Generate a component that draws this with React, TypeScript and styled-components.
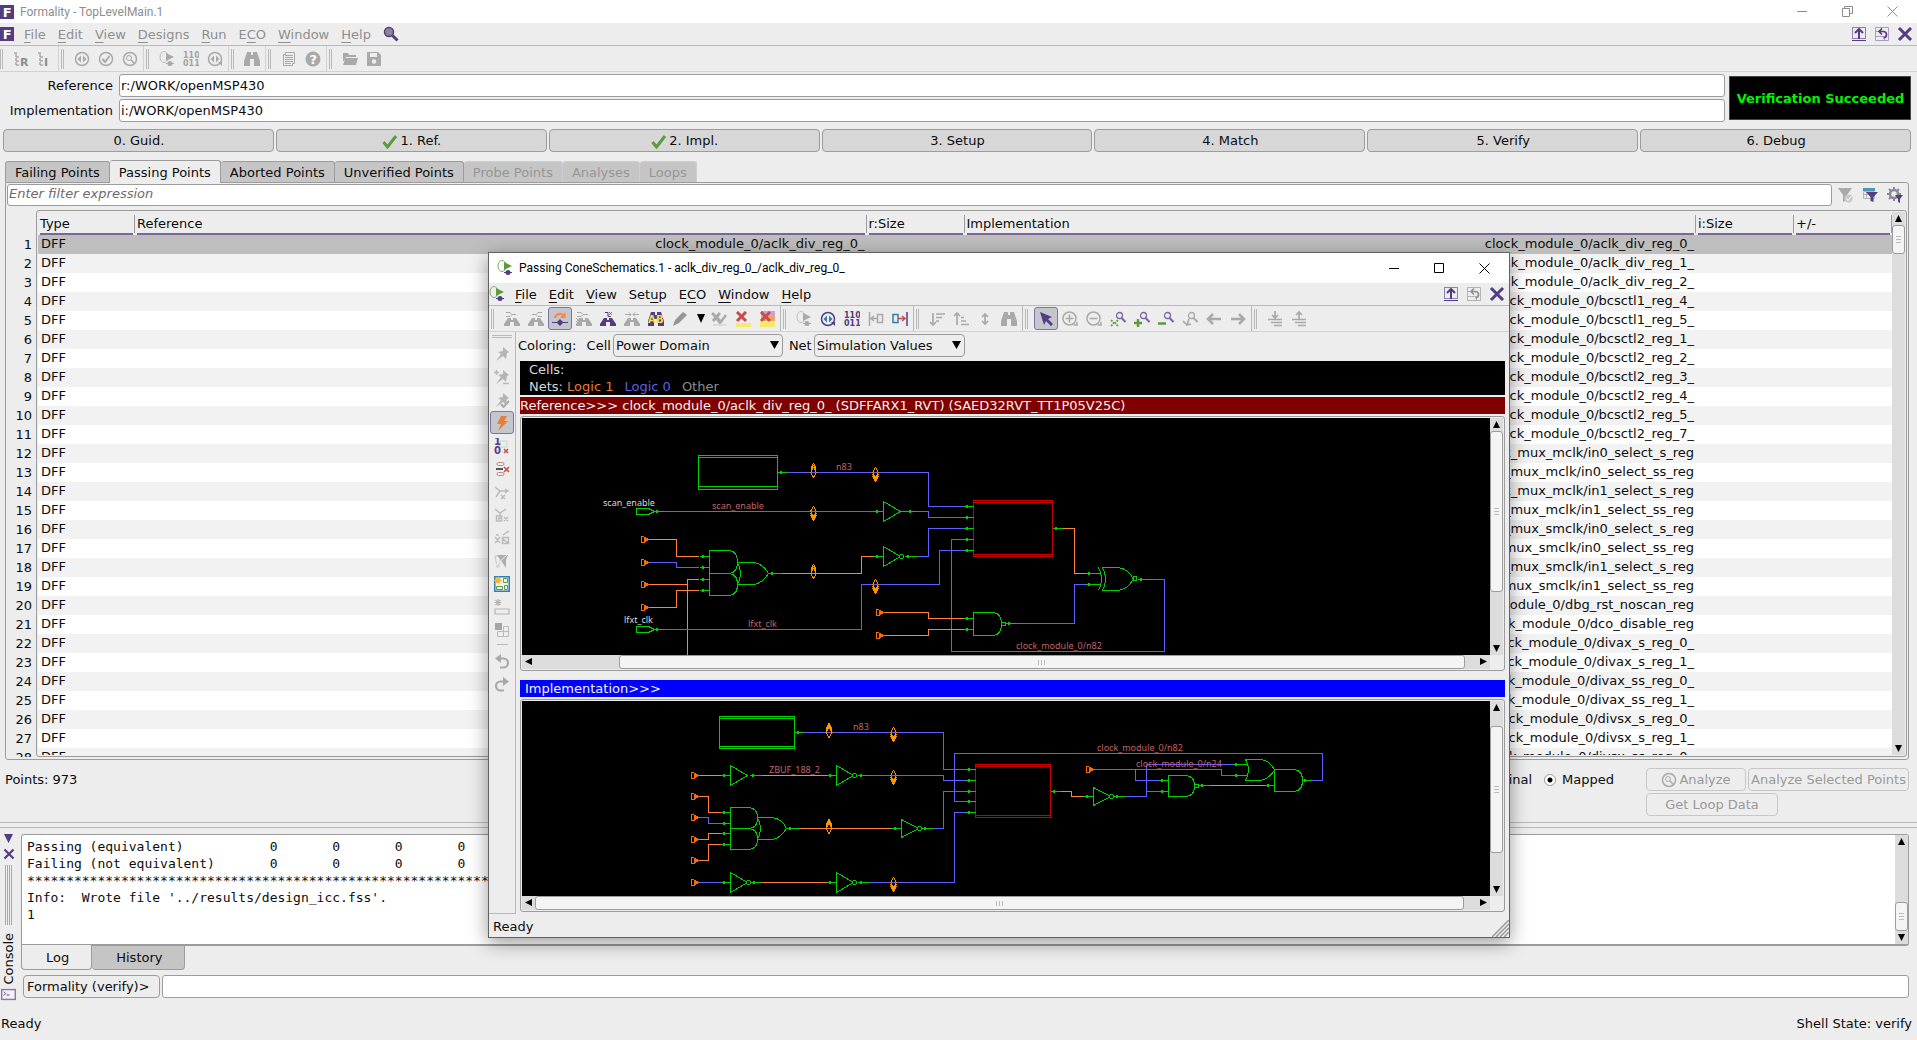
import React from "react";
import styled, { createGlobalStyle, css } from "styled-components";

/* ---------- tokens ---------- */
const c = {
  face: "#ededed",
  line: "#9c9c9c",
  soft: "#b9b9b9",
  faint: "#d2d2d2",
  text: "#0c0c0c",
  mute: "#8f8f8f",
  purple: "#533c82",
  header: "#7a6697",
  gray: "#a9a9a9",
  green: "#5d9a3c",
  orange: "#ff8240",
  blue: "#5f5fff",
  gate: "#00d000",
  red: "#c80000",
};

const Global = createGlobalStyle`
  * { box-sizing: border-box; }
  body { margin: 0; background: ${c.face}; overflow: hidden; }
  button, input, select { font: inherit; color: inherit; margin: 0; border-radius: 0; }
`;

/* ---------- icons ---------- */
const P = c.purple;
const G = c.gray;

const binoc = (f: string) => (
  <path fill={f} d="M3 1h4v3h2V1h4l3 9v5h-6V8H6v7H0v-5z" />
);
const smallBinoc = (f: string) => (
  <path fill={f} d="M4 7h3v2h2V7h3l4 6v2h-6v-4H6v4H0v-2z" />
);
const bits = (f: string) => (
  <g fill={f} fontFamily="DejaVu Sans" fontWeight="700" fontSize="8">
    <text x="0" y="7">110</text>
    <text x="0" y="15">011</text>
  </g>
);
const cone = (a: string, b: string, d: string) => (
  <>
    <ellipse cx="5" cy="6" rx="4" ry="5.500" fill="none" stroke={a} />
    <path d="M7 2l8 4-8 4z" fill={b} />
    <circle cx="11" cy="12.500" r="2.500" fill={d} />
    <path d="M7 12.500h8" stroke={d} />
  </>
);
const compass = (a: string, b: string, tail: boolean) => (
  <>
    <circle cx="8" cy="8" r="6.500" fill="none" stroke={a} strokeWidth="1.500" />
    <path d="M7 4.500v7L3.500 8zM9 4.500v7L12.500 8z" fill={b} />
    {tail && <path d="M11 11h4v4z" fill={a} />}
  </>
);
const magnifier = (a: string) => (
  <>
    <circle cx="9.500" cy="4.500" r="3" fill="none" stroke={a} strokeWidth="1.300" />
    <path d="M11.500 7l4 4" stroke={a} strokeWidth="2" />
  </>
);
const zoomCircle = (f: string, plus: boolean) => (
  <g stroke={f} fill="none" strokeWidth="1.500">
    <circle cx="7.500" cy="7.500" r="6.500" />
    <path d={plus ? "M3.500 7.500h8M7.500 3.500v8" : "M3.500 7.500h8"} />
    <path d="M11.500 14h3.500v-3" />
  </g>
);
const pin = (f: string) => (
  <path fill={f} d="M9 1l6 5-2 1-1 6-3-3-7 5 5-7-3-2 5-1z" />
);
const treeIcon = (letter: string) => (
  <>
    <path d="M1 2h4M3 3v12M3 6h4M3 10h4M3 14h4" stroke={G} strokeWidth="1.500" strokeDasharray="3 1" fill="none" />
    <text x="7" y="15" fontFamily="DejaVu Sans" fontWeight="700" fontSize="11" fill="#8c8c8c">{letter}</text>
  </>
);
const upBox = (
  <>
    <rect x="1.500" y="1.500" width="13" height="11" fill="none" stroke="#8f7fb5" />
    <path d="M8 13V3M4 7l4-4 4 4" fill="none" stroke={P} strokeWidth="2" />
    <path d="M1 14.500h14" stroke={P} />
  </>
);
const backBox = (a: string, b: string) => (
  <>
    <path d="M1.500 1.500h13v13h-13zM1.500 5.500h4M1.500 10.500h9v4" fill="none" stroke={b} />
    <path d="M5 5.500h4q3.500 0 3.500 3t-3 3.500M8 2.500l-3 3 3 3" fill="none" stroke={a} strokeWidth="1.700" />
  </>
);
const undo = (
  <>
    <path d="M3 5.500h6.500a4.500 4.500 0 0 1 0 9H6" fill="none" stroke={G} strokeWidth="2.200" />
    <path d="M1 5.500L7 1v9z" fill={G} />
  </>
);

const icons: Record<string, React.ReactNode> = {
  logo: (
    <>
      <rect x="0" y="0" width="16" height="16" fill={P} />
      <text x="3" y="14" fontFamily="DejaVu Sans" fontWeight="700" fontSize="15" fill="#fff">F</text>
    </>
  ),
  cone: cone("#7fae66", c.green, P),
  coneOff: cone("#bdbdbd", G, G),
  search: (
    <>
      <circle cx="6" cy="6" r="4.500" fill="#8b8794" stroke={P} strokeWidth="1.500" />
      <path d="M9.500 9.500l5 5" stroke={P} strokeWidth="3" />
    </>
  ),
  treeR: treeIcon("R"),
  treeI: treeIcon("I"),
  compassOff: compass(G, G, false),
  compassTail: compass(G, G, true),
  compassOn: compass(P, "#2c7fb5", true),
  check: (
    <>
      <circle cx="8" cy="8" r="6.500" fill="none" stroke={G} strokeWidth="1.500" />
      <path d="M4.500 8l2.500 3 4.500-6" fill="none" stroke={G} strokeWidth="2" />
    </>
  ),
  lens: (
    <>
      <circle cx="8" cy="8" r="6.500" fill="none" stroke={G} strokeWidth="1.500" />
      <circle cx="7" cy="7" r="2.500" fill="none" stroke={G} />
      <path d="M9 9l3.500 3.500" stroke={G} strokeWidth="1.500" />
    </>
  ),
  bitsOff: bits("#a3a3a3"),
  bitsOn: bits(P),
  binocOff: binoc(G),
  doc: (
    <>
      <path d="M4.500 1.500h9v11h-2v2h-9v-11h2z" fill="none" stroke={G} />
      <path d="M4 4.500h8M4 6.500h8M4 8.500h8M4 10.500h8M4 12.500h6" stroke={G} />
    </>
  ),
  help: (
    <>
      <circle cx="8" cy="8" r="7.500" fill={G} />
      <text x="4.500" y="13" fontFamily="DejaVu Sans" fontWeight="700" fontSize="13" fill="#fff">?</text>
    </>
  ),
  folder: <path d="M1 2h5l1 2h7v2H4l-2 4H1zM3.500 7H16l-2 7H1z" fill={G} />,
  save: (
    <>
      <path d="M1 1h11l3 3v11H1z" fill={G} />
      <path d="M4 2h7v4H4z" fill="#ededed" />
      <circle cx="8" cy="10.500" r="2.300" fill="#ededed" />
    </>
  ),
  tick: <path d="M1.500 9l4 5L14 3" fill="none" stroke={c.green} strokeWidth="3" />,
  funnelOff: (
    <>
      <path d="M1 1h14L10 8v5l-4 2V8z" fill={G} />
      <circle cx="11.500" cy="11.500" r="4" fill="#c9c9c9" />
      <path d="M9.500 11.500l1.500 2 3-4" fill="none" stroke="#fff" />
    </>
  ),
  funnelTable: (
    <>
      <path d="M1 1h12v3H1z" fill="#4d94bd" />
      <path d="M1.500 4.500h11v7h-11zM1 7.500h11M4.500 4v8" stroke="#b5b5b5" fill="none" />
      <path d="M4 5h12l-4.500 5v5l-3-1v-4z" fill={P} />
    </>
  ),
  gear: (
    <>
      <circle cx="7" cy="7" r="4" fill="none" stroke="#8b8794" strokeWidth="2.500" />
      <path d="M7 0v3M7 11v3M0 7h3M2 2l2 2M12 2l-2 2M2 12l2-2M11 7h3" stroke="#8b8794" strokeWidth="2" />
      <path d="M8 8h8l-3 4v4l-2-1v-3z" fill={P} />
    </>
  ),
  upBox,
  backBoxOn: backBox(P, "#a89cc4"),
  backBoxOff: backBox("#8f8f8f", "#b3b3b3"),
  close: <path d="M2 2l12 12M14 2L2 14" stroke={P} strokeWidth="3" />,
  binA: (<><path d="M2 1.500h4l2 2h4M2 5.500h4l2-2" stroke={G} fill="none" />{smallBinoc(G)}</>),
  binB: (<><path d="M4 3.500h4l2-2h4M8 3.500l2 2h4" stroke={G} fill="none" />{smallBinoc(G)}</>),
  probe: (
    <>
      <path d="M3 7a5 5 0 0 1 9-2" fill="none" stroke={c.orange} strokeWidth="2" />
      <path d="M13.500 1v6H8z" fill={c.orange} />
      <path d="M0 11.500h16" stroke={P} />
      <path d="M8 8l3.500 3.500L8 15l-3.500-3.500z" fill={P} />
    </>
  ),
  binC: (<><path d="M1 1.500h4l2 2h5M1 5.500h4l2-2M0 7l4 4M4 7l-4 4" stroke={G} fill="none" />{smallBinoc(G)}</>),
  binD: (
    <>
      <path d="M5 1.500h3v4h3" stroke={P} fill="none" />
      <path d="M9 1l3 3M12 1L9 4" stroke="#c94b4b" fill="none" />
      {smallBinoc(P)}
    </>
  ),
  binE: (<><path d="M1 3.500h6M9 3.500h6M5 1.500l2 2-2 2M11 1.500l-2 2 2 2" stroke={G} fill="none" />{smallBinoc(G)}</>),
  binAB: (
    <>
      {binoc(P)}
      <g fontFamily="DejaVu Sans" fontWeight="700" fontSize="10" fill="#f2df4e">
        <text x="0" y="12">A</text>
        <text x="8" y="12">B</text>
      </g>
    </>
  ),
  pencil: <path d="M1 15l2-6 8-8 4 3-8 8z" fill="#969696" />,
  down: <path d="M4 3h8L8 12z" fill="#000" />,
  markOff: (
    <>
      <path d="M1 2l8 8M9 2l-7 8" stroke={G} strokeWidth="3" />
      <path d="M6 8l3 4 6-8" stroke={G} strokeWidth="2.500" fill="none" />
      <path d="M2 13h13v2H2z" fill="#dcdcdc" />
    </>
  ),
  markX: (
    <>
      <path d="M1 12h15v4H1z" fill="#f4ea6c" />
      <path d="M2 1l9 9M11 1l-9 9" stroke="#c94b4b" strokeWidth="3" />
    </>
  ),
  markAll: (
    <>
      <path d="M2 0h14v5H2z" fill="#c9a0f0" />
      <path d="M2 5h14v5H2z" fill="#f0a45c" />
      <path d="M1 11h15v5H1z" fill="#f4ea6c" />
      <path d="M2 1l9 9M11 1l-9 9" stroke="#c94b4b" strokeWidth="3" />
    </>
  ),
  gateLeft: <path d="M1.500 1v14M9.500 3.500h5v8h-5zM2 7.500h7M6 5L3 7.500 6 10" stroke={G} strokeWidth="1.500" fill="none" />,
  gateRight: (
    <>
      <rect x="1" y="3.500" width="5" height="8" fill="none" stroke="#2c7fb5" strokeWidth="1.500" />
      <path d="M6 7.500h7M10 5l3 2.500-3 2.500" stroke="#c94b4b" strokeWidth="1.500" fill="none" />
      <path d="M15 1v14" stroke={P} strokeWidth="1.500" />
    </>
  ),
  sortDown: <path d="M4 2v12M1 11l3 3 3-3M7 3h9M7 6.500h6M7 10h3" stroke={G} strokeWidth="1.700" fill="none" />,
  sortUp: <path d="M4 14V2M1 5l3-3 3 3M8 6.500h3M8 10h5M8 13.500h8" stroke={G} strokeWidth="1.700" fill="none" />,
  upDown: <path d="M8 3v10M5 6l3-3 3 3M5 10l3 3 3-3" stroke={G} strokeWidth="1.700" fill="none" />,
  cursor: <path d="M2 1l12 5-4 2 5 5-2 2-5-5-2 4z" fill={P} />,
  zoomPlus: zoomCircle(G, true),
  zoomMinus: zoomCircle(G, false),
  zoomFit: (<g>{magnifier("#7a68a6")}<path d="M1 9l3 3M8 9l-3 3M1 15l3-3M8 15l-3-3" stroke={c.green} strokeWidth="1.700" strokeDasharray="2 1" /></g>),
  zoomIn: (<g>{magnifier("#7a68a6")}<path d="M0 12h8M4 8v8" stroke={c.green} strokeWidth="2.500" /></g>),
  zoomOut: (<g>{magnifier("#7a68a6")}<path d="M0 12.500h8" stroke={c.green} strokeWidth="2.500" /></g>),
  zoomBack: (<g>{magnifier(G)}<path d="M7 8l-2 6M1 10l4 4 4-1" stroke={G} strokeWidth="1.700" fill="none" /></g>),
  left: <path d="M15 8H2M7 3L2 8l5 5" stroke={G} strokeWidth="2.500" fill="none" />,
  right: <path d="M1 8h13M9 3l5 5-5 5" stroke={G} strokeWidth="2.500" fill="none" />,
  stackDown: <path d="M8 0v7M5 4l3 3 3-3M1 8.500h14M4 11.500h11M7 14.500h8" stroke={G} strokeWidth="1.700" fill="none" />,
  stackUp: <path d="M8 8V1M5 4l3-3 3 3M1 8.500h14M4 11.500h11M7 14.500h8" stroke={G} strokeWidth="1.700" fill="none" />,
  pin: pin("#b5b5b5"),
  pinPlus: (<>{pin("#b5b5b5")}<path d="M0 3.500h5M2.500 1v5M9 14.500h6" stroke="#b5b5b5" strokeWidth="1.500" /></>),
  pinCheck: (<>{pin("#b5b5b5")}<path d="M7 12l2.500 3L15 9" stroke={G} strokeWidth="2" fill="none" /></>),
  bolt: <path d="M7 1h6l-3 5h4L4 16l3-7H3z" fill="#ee7a35" />,
  oneZero: (
    <>
      <rect x="6" y="3" width="7" height="6" fill="none" stroke="#c5d8ba" />
      <g fontFamily="DejaVu Sans" fontWeight="700" fontSize="10" fill={P}>
        <text x="0" y="7">1</text>
        <text x="0" y="16">0</text>
      </g>
      <path d="M10 11l4 4M14 11l-4 4" stroke="#c94b4b" strokeWidth="1.500" />
    </>
  ),
  cut: (
    <>
      <rect x="3" y="1.500" width="7" height="3" rx="1.500" fill="none" stroke="#d08080" />
      <rect x="3" y="11.500" width="7" height="3" rx="1.500" fill="none" stroke="#d08080" />
      <path d="M2 8h7" stroke="#555" strokeWidth="2" />
      <path d="M10 6l5 5M15 6l-5 5" stroke="#c94b4b" strokeWidth="1.500" />
    </>
  ),
  netX: <path d="M1 3l5 4h7M6 7l-4 6M11 5l3 2-3 2M7 11l4 4M11 11l-4 4" stroke="#bababa" strokeWidth="1.500" fill="none" />,
  netBox: <path d="M1 2l5 4 6-4M6 6v2M2.500 9h5v5h-5zM4 11l1 1 2-2M10 10l4 4M14 10l-4 4" stroke="#bababa" strokeWidth="1.500" fill="none" />,
  netBox2: <path d="M9 5l6-4M1 7l5 6M6 7l-5 6M8.500 7.500h6v6h-6zM9 9l5 4M2 5h3" stroke="#bababa" strokeWidth="1.500" fill="none" />,
  cutGate: (<><path d="M1 3h6l-2 8v3H3z" fill="none" stroke="#c4c4c4" /><path d="M3 2h11l-2 5v8L8 9z" fill="#adadad" /><path d="M14 1L2 12" stroke="#ededed" /></>),
  schematic: (
    <>
      <rect x="0.750" y="0.750" width="14.500" height="14.500" fill="#eef3f6" stroke="#2c7fb5" strokeWidth="1.500" />
      <path d="M9.500 2.500h4v4h-4zM10.500 9.500h3v4h-3zM2.500 10.500h6v3h-6z" fill="none" stroke={c.green} />
      <circle cx="4" cy="4.500" r="2.500" fill="#f2b53c" />
      <path d="M0 4.500h8M4 0.500v8M1 1.500l6 6M7 1.500l-6 6" stroke="#f2b53c" />
    </>
  ),
  newBox: <path d="M4 0v7M0.500 3.500h7M1.500 1l5 5M6.500 1l-5 5M1 10h14v5H1z" stroke="#b5b5b5" strokeWidth="1.200" fill="none" />,
  blocks: (<><path d="M1 1h7v7H1z" fill="#a5a5a5" /><path d="M9.500 4.500h5v5h-5zM3.500 9.500h11v5h-11zM9.500 9v6" stroke="#bababa" fill="none" /></>),
  undo,
  redo: <g transform="matrix(-1 0 0 1 16 0)">{undo}</g>,
  terminal: (<><rect x="0.750" y="2.750" width="14.500" height="10.500" fill="#f4f2f8" stroke="#8877b0" strokeWidth="1.500" /><path d="M3 5l2 2-2 2M6 8.500h3" stroke={P} fill="none" /></>),
};

const Svg = styled.svg`
  display: block;
  flex: none;
`;
const Icon = ({ name, size = 16 }: { name: string; size?: number }) => (
  <Svg width={size} height={size} viewBox="0 0 16 16" aria-hidden="true">
    {icons[name]}
  </Svg>
);

/* ---------- shared window parts ---------- */
const TitleBar = styled.header<{ $h: number; $pad: number; $dim?: boolean }>`
  display: flex;
  align-items: center;
  height: ${(p) => p.$h}px;
  padding: 0 2px 0 ${(p) => p.$pad}px;
  background: #fff;
  color: ${(p) => (p.$dim ? "#8d8d8d" : "#000")};
  font: 12px/16px Roboto, "Noto Sans", sans-serif;
  white-space: nowrap;
`;
const Caption = styled.h1`
  flex: 1;
  margin: 0 0 0 6px;
  font: inherit;
`;
const Spacer = styled.span`
  flex: 1;
`;
const WinButton = styled.button`
  width: 45px;
  height: 100%;
  padding: 0;
  border: 0;
  background: none;
  display: grid;
  place-items: center;
`;
const WinControls = ({ restore }: { restore?: boolean }) => (
  <>
    <WinButton aria-label="Minimize">
      <Svg width="11" height="11"><path d="M0 5.500h10" stroke="currentColor" /></Svg>
    </WinButton>
    <WinButton aria-label={restore ? "Restore" : "Maximize"}>
      <Svg width="11" height="11" fill="none" stroke="currentColor">
        {restore ? <path d="M0.500 2.500h7v8h-7zM2.500 2.500v-2h8v7h-3" /> : <path d="M0.500 0.500h9v9h-9z" />}
      </Svg>
    </WinButton>
    <WinButton aria-label="Close">
      <Svg width="11" height="11"><path d="M0.500 0.500l10 10M10.500 0.500l-10 10" stroke="currentColor" /></Svg>
    </WinButton>
  </>
);

const MenuBar = styled.nav<{ $dim?: boolean }>`
  display: flex;
  align-items: center;
  height: 23px;
  padding-right: 1px;
  border-bottom: 1px solid ${c.soft};
  color: ${(p) => (p.$dim ? c.mute : c.text)};
`;
const MenuList = styled.div<{ $pad: number }>`
  display: flex;
  gap: 12px;
  padding: 0 12px 0 ${(p) => p.$pad}px;
`;
const MenuItem = styled.button`
  padding: 0;
  border: 0;
  background: none;
  u {
    text-underline-offset: 3px;
    text-decoration-thickness: 1px;
    text-decoration-skip-ink: none;
  }
`;
const menu = (items: string[]) =>
  items.map((t) => {
    const i = t.indexOf("&");
    return (
      <MenuItem key={t}>
        {t.slice(0, i)}
        <u>{t[i + 1]}</u>
        {t.slice(i + 2)}
      </MenuItem>
    );
  });

const Toolbar = styled.div`
  display: flex;
  height: 26px;
  border-bottom: 1px solid ${c.faint};
`;
const ToolGroup = styled.div<{ $dark?: boolean; $first?: boolean; $last?: boolean }>`
  display: flex;
  align-items: center;
  padding: 0 1px 0 ${(p) => (p.$first ? 0 : 2)}px;
  border-right: ${(p) => (p.$last ? 0 : 1)}px solid ${(p) => (p.$dark ? c.soft : c.faint)};
`;
const Grip = styled.span<{ $across?: boolean }>`
  flex: none;
  border: 1px solid ${c.soft};
  ${(p) =>
    p.$across
      ? css`
          width: 20px;
          height: 3px;
          border-width: 1px 0;
        `
      : css`
          width: 3px;
          height: 20px;
          border-width: 0 1px;
          margin-right: 6px;
        `}
`;
const Tool = styled.button<{ $on?: boolean; $w?: number }>`
  display: grid;
  place-items: center;
  flex: none;
  width: ${(p) => p.$w ?? 24}px;
  height: 23px;
  padding: 0;
  border: 1px solid ${(p) => (p.$on ? "#8172a6" : "transparent")};
  border-radius: 3px;
  background: ${(p) => (p.$on ? "#c3c7cb" : "none")};
`;
const tools = (names: string[], on?: string, w = 24) =>
  names.map((n) => (
    <Tool key={n} aria-label={n} $on={n === on} $w={n === "down" ? 15 : w}>
      <Icon name={n} />
    </Tool>
  ));

/* ---------- scroll bar ---------- */
const Bar = styled.div<{ $row?: boolean }>`
  display: flex;
  flex: none;
  flex-direction: ${(p) => (p.$row ? "row" : "column")};
  ${(p) => (p.$row ? "height: 14px;" : "width: 13px;")}
  background: #dcdcdc;
`;
const Arrow = styled.button`
  flex: none;
  display: grid;
  place-items: center;
  width: 13px;
  height: 13px;
  padding: 0;
  border: 0;
  background: none;
`;
const Gap = styled.span<{ $n: number }>`
  flex: ${(p) => p.$n} 1 0;
`;
const Thumb = styled.span<{ $n: number; $row?: boolean }>`
  flex: ${(p) => p.$n} 1 0;
  display: grid;
  place-items: center;
  border: 1px solid ${c.line};
  border-radius: 3px;
  background: #f4f4f4;
  &::after {
    content: "";
    width: ${(p) => (p.$row ? 7 : 5)}px;
    height: ${(p) => (p.$row ? 5 : 7)}px;
    background: repeating-linear-gradient(${(p) => (p.$row ? "90deg" : "180deg")}, #bbb 0 1px, transparent 1px 3px);
  }
`;
const heads: Record<string, string> = {
  up: "M3 10h7L6.500 3z",
  down: "M3 3h7l-3.500 7z",
  left: "M10 3v7L3 6.500z",
  right: "M3 3v7l7-3.500z",
};
const Scroll = ({ row, parts }: { row?: boolean; parts: [number, number, number] }) => {
  const [a, b] = row ? ["left", "right"] : ["up", "down"];
  return (
    <Bar $row={row}>
      <Arrow aria-label={`Scroll ${a}`}><Svg width="13" height="13"><path d={heads[a]} /></Svg></Arrow>
      <Gap $n={parts[0]} />
      <Thumb $n={parts[1]} $row={row} />
      <Gap $n={parts[2]} />
      <Arrow aria-label={`Scroll ${b}`}><Svg width="13" height="13"><path d={heads[b]} /></Svg></Arrow>
    </Bar>
  );
};

/* ---------- main window ---------- */
const Shell = styled.div`
  position: relative;
  display: flex;
  flex-direction: column;
  height: 100vh;
  overflow: hidden;
  background: ${c.face};
  color: ${c.text};
  font: 13px/15px "DejaVu Sans", sans-serif;
`;
const Paths = styled.section`
  display: grid;
  grid-template-columns: 113px 1fr 182px;
  grid-template-rows: 23px 23px;
  gap: 2px 0;
  padding: 2px 6px 0 0;
  align-items: center;
`;
const PathLabel = styled.label`
  grid-column: 1;
  text-align: right;
`;
const PathInput = styled.input`
  grid-column: 2;
  height: 23px;
  min-width: 0;
  margin: 0 4px 0 6px;
  padding: 0 1px;
  border: 1px solid ${c.line};
  border-radius: 3px;
  background: #fff;
`;
const Verdict = styled.output`
  grid-column: 3;
  grid-row: 1 / 3;
  height: 44px;
  border: 1px solid #444;
  background: #000;
  color: #00f600;
  font-weight: 700;
  display: grid;
  place-items: center;
  padding-left: 1px;
  white-space: nowrap;
`;
const Stages = styled.div`
  display: flex;
  gap: 2px;
  padding: 7px 6px 8px 3px;
`;
const Stage = styled.button`
  flex: 1 1 0;
  height: 23px;
  padding: 0 0 0 1px;
  display: flex;
  justify-content: center;
  align-items: center;
  gap: 2px;
  border: 1px solid ${c.line};
  border-radius: 4px;
  background: #d7d7d7;
`;
const Tabs = styled.div`
  display: flex;
  align-items: flex-end;
  height: 22px;
  padding-left: 5px;
`;
const Tab = styled.button<{ $on?: boolean }>`
  height: ${(p) => (p.$on ? 23 : 21)}px;
  margin-bottom: ${(p) => (p.$on ? -1 : 0)}px;
  padding: 0 9px;
  border: 1px solid ${c.line};
  border-bottom: 0;
  border-left-width: ${(p) => (p.$on ? 0 : 1)}px;
  border-radius: 3px 3px 0 0;
  background: ${(p) => (p.$on ? c.face : "#c5c5c5")};
  z-index: ${(p) => (p.$on ? 1 : 0)};
  & + & {
    border-left-width: 0;
  }
  &:disabled {
    color: #959595;
    border-color: #cfcfcf;
  }
`;
const Panel = styled.section`
  flex: 1;
  min-height: 0;
  display: flex;
  flex-direction: column;
  gap: 4px;
  margin: 0 8px 0 5px;
  padding: 1px 1px 2px 1px;
  border: 1px solid ${c.line};
  border-radius: 0 3px 3px 3px;
`;
const FilterRow = styled.div`
  display: flex;
  align-items: center;
  height: 22px;
  flex: none;
`;
const FilterInput = styled.input`
  flex: 1;
  min-width: 0;
  height: 22px;
  padding: 0 0 4px 1px;
  border: 1px solid ${c.line};
  border-radius: 3px;
  background: #fff;
  &::placeholder {
    color: #6c6c6c;
    opacity: 1;
    font-style: italic;
  }
`;
const Grid = styled.div`
  flex: 1;
  min-height: 0;
  display: flex;
`;
const Gutter = styled.ol`
  width: 29px;
  margin: 0;
  padding: 25px 4px 0 0;
  list-style: none;
  overflow: hidden;
  text-align: right;
  line-height: 19px;
`;
const GridFrame = styled.div`
  flex: 1;
  min-width: 0;
  display: flex;
  border: 1px solid ${c.line};
  border-radius: 3px;
  padding: 1px;
  overflow: hidden;
`;
const TableBox = styled.div`
  flex: 1;
  min-width: 0;
  overflow: hidden;
`;
const Table = styled.table`
  width: 100%;
  table-layout: fixed;
  border-collapse: collapse;
  line-height: 17px;
  th,
  td {
    padding: 0;
    font-weight: 400;
    text-align: left;
    white-space: nowrap;
    overflow: hidden;
  }
  td {
    height: 19px;
    padding: 0 2px 2px 3px;
  }
  tbody tr:nth-child(odd) {
    background: #fff;
  }
  tbody tr:nth-child(even) {
    background: #f2f2f2;
  }
  tbody tr:first-child {
    background: #bebebe;
  }
`;
const Path = styled.td`
  && {
    text-align: right;
  }
`;
const Head = styled.div`
  display: flex;
  height: 23px;
  padding: 3px 0 0 2px;
`;
const HeadText = styled.span`
  flex: 1;
  line-height: 18px;
  border-bottom: 2px solid ${c.header};
`;
const HeadRule = styled.span`
  width: 1px;
  margin: 0 0 2px 1px;
  background: ${c.line};
`;
const Under = styled.div`
  display: flex;
  justify-content: space-between;
  padding: 8px 8px 6px 5px;
`;
const UnderText = styled.span`
  line-height: 23px;
`;
const Actions = styled.div`
  display: flex;
`;
const Choice = styled.label`
  display: flex;
  align-items: center;
  gap: 6px;
  height: 23px;
  margin-right: 12px;
`;
const Radio = styled.input`
  appearance: none;
  && {
    width: 12px;
    height: 12px;
    border: 1px solid ${c.line};
    border-radius: 50%;
    background: #fff;
  }
  &&:checked {
    background: radial-gradient(circle, #000 0 2px, #fff 3px);
  }
`;
const Buttons = styled.div`
  display: grid;
  grid-template-columns: 100px 30px 129px;
  gap: 2px;
  margin-left: 20px;
`;
const PlainButton = styled.button<{ $span: string }>`
  grid-column: ${(p) => p.$span};
  height: 23px;
  padding: 0;
  display: flex;
  align-items: center;
  justify-content: center;
  gap: 2px;
  border: 1px solid #c6c6c6;
  border-radius: 4px;
  background: none;
  white-space: nowrap;
  &:disabled {
    color: #999;
  }
`;
const Splitter = styled.div`
  height: 6px;
  flex: none;
  border: 1px solid ${c.soft};
  border-width: 1px 0;
`;
const Dock = styled.section`
  display: flex;
  padding: 6px 8px 5px 0;
`;
const DockStrip = styled.div`
  width: 17px;
  margin-right: 4px;
  display: flex;
  flex-direction: column;
  align-items: center;
  height: 168px;
`;
const DockGrip = styled.span`
  width: 7px;
  flex: 1;
  background: repeating-linear-gradient(90deg, #aaa 0 1px, transparent 1px 2px);
`;
const DockName = styled.span`
  writing-mode: vertical-rl;
  transform: rotate(180deg);
  margin: 8px 0 2px;
`;
const IconButton = styled.button`
  padding: 0;
  margin: 0 0 5px;
  border: 0;
  background: none;
`;
const DockBody = styled.div`
  flex: 1;
  min-width: 0;
`;
const LogFrame = styled.div`
  display: flex;
  height: 112px;
  border: 1px solid ${c.line};
  border-bottom-width: 2px;
  border-radius: 3px 3px 3px 0;
  background: #fff;
`;
const Log = styled.pre`
  flex: 1;
  min-width: 0;
  margin: 0;
  padding: 3px 5px;
  overflow: hidden;
  font: 13px/17px "DejaVu Sans Mono", monospace;
`;
const LogTabs = styled.div`
  display: flex;
  align-items: flex-start;
  height: 29px;
`;
const LogTab = styled.button<{ $on?: boolean }>`
  height: ${(p) => (p.$on ? 25 : 24)}px;
  margin-top: ${(p) => (p.$on ? -1 : 0)}px;
  padding: 0 22px 0 24px;
  border: 1px solid ${c.line};
  border-top: 0;
  border-radius: 0 0 4px 4px;
  background: ${(p) => (p.$on ? c.face : "#c5c5c5")};
  & + & {
    border-left-width: 0;
  }
`;
const CommandRow = styled.form`
  display: flex;
  gap: 2px;
  padding-left: 2px;
`;
const Prompt = styled.button`
  width: 137px;
  height: 23px;
  padding: 0 3px;
  text-align: left;
  border: 1px solid ${c.line};
  border-radius: 4px;
  background: none;
`;
const Command = styled.input`
  flex: 1;
  min-width: 0;
  height: 23px;
  border: 1px solid ${c.line};
  border-radius: 3px;
  background: #fff;
`;
const Status = styled.footer<{ $h: number; $pad: string }>`
  display: flex;
  justify-content: space-between;
  align-items: center;
  height: ${(p) => p.$h}px;
  padding: ${(p) => p.$pad};
`;

/* ---------- cone schematic window ---------- */
const Dialog = styled.section`
  position: absolute;
  left: 488px;
  top: 252px;
  width: 1022px;
  height: 686px;
  z-index: 2;
  display: flex;
  flex-direction: column;
  border: 1px solid #626262;
  background: ${c.face};
  box-shadow: 0 5px 18px rgba(0, 0, 0, 0.4);
`;
const DialogMain = styled.div`
  flex: 1;
  min-height: 0;
  display: flex;
`;
const SideBar = styled.div`
  width: 27px;
  display: flex;
  flex-direction: column;
  align-items: center;
  padding-top: 3px;
  border-right: 1px solid ${c.soft};
  border-bottom: 1px solid ${c.soft};
`;
const SideTools = styled.div`
  margin-top: 4px;
`;
const SideRule = styled.span`
  width: 11px;
  height: 1px;
  margin: 3px 0 4px;
  background: ${c.soft};
`;
const Work = styled.div`
  flex: 1;
  min-width: 0;
  display: flex;
  flex-direction: column;
  padding: 2px 4px 0 2px;
`;
const Coloring = styled.div`
  display: flex;
  align-items: center;
  height: 23px;
`;
const FieldLabel = styled.label`
  margin: 0 2px 0 6px;
`;
const Picker = styled.span<{ $w: number }>`
  position: relative;
  width: ${(p) => p.$w}px;
  svg {
    position: absolute;
    right: 4px;
    top: 3px;
    pointer-events: none;
  }
`;
const Select = styled.select`
  appearance: none;
  width: 100%;
  height: 23px;
  padding: 0 2px;
  border: 1px solid ${c.line};
  border-radius: 4px;
  background: ${c.face};
`;
const Legend = styled.div`
  margin: 4px 0 2px 2px;
  padding: 0 9px;
  background: #000;
  color: #d8d8d8;
  line-height: 17px;
`;
const Key = styled.span<{ $c: string }>`
  color: ${(p) => p.$c};
  margin-right: 12px;
  & + & {
    margin-left: -1px;
  }
`;
const Banner = styled.div<{ $bg: string; $pad: number }>`
  margin-left: 2px;
  height: 17px;
  padding-left: ${(p) => p.$pad}px;
  line-height: 17px;
  color: #f3f3f3;
  background: ${(p) => p.$bg};
`;
const View = styled.div<{ $after: number }>`
  display: grid;
  grid-template-columns: 1fr 13px;
  margin: 2px 0 ${(p) => p.$after}px 2px;
  padding: 1px;
  border: 1px solid ${c.line};
  border-radius: 3px;
`;
const Canvas = styled.svg`
  display: block;
  width: 968px;
  background: #000;
  shape-rendering: crispEdges;
  fill: none;
`;
const SizeGrip = styled.svg`
  align-self: flex-end;
`;

/* schematic primitives */
const Wire = ({ d, k = c.blue }: { d: string; k?: string }) => <path d={d} stroke={k} />;
const Pin = ({ x, y, to }: { x: number; y: number; to: number }) => (
  <>
    <path d={`M${x} ${y}H${to}`} stroke={c.gate} />
    <path d={`M${x + 2} ${y - 2}l4 2-4 2z`} fill={c.gate} />
  </>
);
const InPin = ({ x, y }: { x: number; y: number }) => <Pin x={x - 9.5} y={y} to={x} />;
const Buf = ({ x, y, inv, h = 10 }: { x: number; y: number; inv?: boolean; h?: number }) => (
  <g stroke={c.gate}>
    <path d={`M${x} ${y - h}v${2 * h}l17 -${h}z`} />
    {inv && <circle cx={x + 18} cy={y} r="2" fill="#000" />}
  </g>
);
const Off = ({ x, y }: { x: number; y: number }) => (
  <path d={`M${x} ${y - 3}v6h1q3 0 3-3t-3-3zM${x + 3} ${y - 2}l4 2-4 2zM${x + 4} ${y}h4`} stroke="#ff6a00" />
);
const Cross = ({ x, y, up }: { x: number; y: number; up?: boolean }) => {
  const s = up ? -1 : 1;
  const chevron = (q: number) => `M${x - 3} ${q}L${x} ${q + 5 * s}L${x + 3} ${q}`;
  return (
    <path
      d={`M${x} ${y - 5}l3 5-3 5-3-5z${chevron(y + 2 * s)}${chevron(y + 4 * s)}`}
      stroke="#ff9500"
    />
  );
};
const And = ({ x, y, h, w, inv }: { x: number; y: number; h: number; w: number; inv?: boolean }) => (
  <g stroke={c.gate}>
    <path d={`M${x} ${y}h${w - 10}q10 0 10 ${h / 2}t-10 ${h / 2}h-${w - 10}z`} />
    {inv && <circle cx={x + w + 2} cy={y + h / 2} r="2" />}
  </g>
);
const Or = ({ x, y, h, w }: { x: number; y: number; h: number; w: number }) => (
  <path
    stroke={c.gate}
    d={`M${x} ${y}h${w / 2}q10 1 ${w / 2} ${h / 2}q-6 ${h / 2 - 1} -${w / 2} ${h / 2}h-${w / 2}q6 -${h / 2} 0 -${h}`}
  />
);
const Port = ({ y }: { y: number }) => (
  <path d={`M636.5 ${y - 3}h12l6 3-6 3h-12z`} stroke={c.gate} />
);
const Net = ({ x, y, k = "#c06464", children }: { x: number; y: number; k?: string; children: string }) => (
  <text x={x} y={y} fill={k} fontFamily="Noto Sans" fontSize="9">{children}</text>
);
const O = c.orange;

const ReferenceCone = () => (
  <Canvas viewBox="522 418 968 237" height="237" role="img" aria-label="Reference cone">
    <path d="M698.500 455.500h79v34h-79zM698.500 457.500h79M698.500 486.500h79" stroke={c.gate} />
    <path d="M973.500 500.500h79v56h-79zM973.500 502.500h79M973.500 554.500h79" stroke={c.red} />
    <Wire d="M787 472.500H928.500V506.500H964" />
    <Pin x={778} y={472.5} to={787} />
    <Wire d="M664 511.500H874M917 511.500H928.500V517.500H964" />
    <Port y={511.5} />
    <Pin x={654} y={511.5} to={664} />
    <Buf x={883.5} y={511.5} />
    <Pin x={907} y={511.5} to={917} /><path d="M900 511.500h8" stroke={c.gate} />
    <Wire k={O} d="M648 539.500H676.500V556.500H699M648 584.500H687.500M687.500 655V579.500H699M648 607.500H676.500V590.500H699M782 573.500H861.500V556.500H874" />
    <Wire d="M648 562.500H676.500V567.500H699M917 556.500H928.500V528.500H964" />
    {[539.5, 562.5, 584.5, 607.5].map((y) => <Off key={y} x={641.5} y={y} />)}
    {[556.5, 567.5, 579.5, 590.5].map((y) => <InPin key={y} x={709.5} y={y} />)}
    <And x={709.5} y={550.5} h={23} w={28} />
    <And x={709.5} y={573.5} h={22} w={28} />
    <Or x={737.5} y={562.5} h={22} w={31} />
    <Pin x={769} y={573.5} to={782} />
    <InPin x={883.5} y={511.5} />
    <InPin x={883.5} y={556.5} />
    <Buf x={883.5} y={556.5} inv />
    <Pin x={905} y={556.5} to={917} />
    <Wire d="M664 629.500H861.500V584.500H939.500V550.500H964M1017 623.500H1074.500V584.500H1086M1153 579.500H1164.500V651.500H951.500V539.500H964" />
    <Port y={629.5} />
    <Pin x={654} y={629.5} to={664} />
    <Wire k={O} d="M883 612.500H928.500V618.500H964M883 635.500H928.500V629.500H964M1063 528.500H1074.500V573.500H1086" />
    <Off x={876.5} y={612.5} />
    <Off x={876.5} y={635.5} />
    {[506.5, 517.5, 528.5, 539.5, 550.5, 618.5, 629.5].map((y) => <InPin key={y} x={973.5} y={y} />)}
    <And x={973.5} y={612.5} h={23} w={28} inv />
    <Pin x={1006} y={623.5} to={1017} />
    <Pin x={1053} y={528.5} to={1063} />
    <Pin x={1086} y={573.5} to={1101} />
    <Pin x={1086} y={584.5} to={1101} />
    <path d="M1098.500 567.500q6 11.500 0 23" stroke={c.gate} />
    <Or x={1102.5} y={567.5} h={23} w={31} />
    <circle cx="1135" cy="578.500" r="2" stroke={c.gate} />
    <Pin x={1138} y={579.5} to={1153} />
    <Cross x={813.5} y={472.5} up />
    <Cross x={875.5} y={472.5} />
    <Cross x={813.5} y={511.5} />
    <Cross x={813.5} y={573.5} up />
    <Cross x={875.5} y={584.5} />
    <Net x={836} y={470}>n83</Net>
    <Net x={603} y={506} k="#d8d8d8">scan_enable</Net>
    <Net x={712} y={509}>scan_enable</Net>
    <Net x={624} y={623} k="#d8d8d8">lfxt_clk</Net>
    <Net x={748} y={627}>lfxt_clk</Net>
    <Net x={1016} y={649}>clock_module_0/n82</Net>
  </Canvas>
);

const ImplementationCone = () => (
  <Canvas viewBox="522 701 968 195" height="195" role="img" aria-label="Implementation cone">
    <path d="M719.500 716.500h75v32h-75zM719.500 718.500h75M719.500 746.500h75" stroke={c.gate} />
    <path d="M975.500 764.500h75v53h-75zM975.500 766.500h75M975.500 815.500h75" stroke={c.red} />
    <Wire d="M804 732.500H943.500V769.500H967M870 775.500H943.500V780.500H967M933 828.500H943.500V791.500H967M870 882.500H954.500V812.500H967M967 801.500H954.500V753.500H1322.500V780.500H1312M698 817.500H708.500V823.500H721M698 882.500H721" />
    <Wire k={O} d="M698 775.500H721M762 775.500H827M698 796.500H708.500V812.500H721M698 839.500H708.500V833.500H721M698 860.500H708.500V844.500H721M799 828.500H892M762 882.500H827M1061 791.500H1071.500V796.500H1084M1210 785.500H1265" />
    <Wire d="M1125 796.500H1146.500V764.500H1234M1146.500 791.500H1159M1094 769.500H1221.500V775.500H1234M1135.500 769.500V780.500H1159" />
    {[775.5, 796.5, 817.5, 839.5, 860.5, 882.5].map((y) => <Off key={y} x={691.5} y={y} />)}
    {[775.5, 812.5, 823.5, 833.5, 844.5, 882.5].map((y) => <InPin key={y} x={730.5} y={y} />)}
    {[769.5, 780.5, 791.5, 801.5, 812.5].map((y) => <InPin key={y} x={975.5} y={y} />)}
    <Pin x={795} y={732.5} to={804} />
    <Buf x={730.5} y={775.5} />
    <Pin x={750} y={775.5} to={762} />
    <InPin x={836.5} y={775.5} />
    <Buf x={836.5} y={775.5} inv />
    <Pin x={858} y={775.5} to={870} />
    <And x={730.5} y={807.5} h={21} w={27} />
    <And x={730.5} y={828.5} h={21} w={27} />
    <Or x={757.5} y={817.5} h={22} w={29} />
    <Pin x={787} y={828.5} to={799} />
    <InPin x={901.5} y={828.5} />
    <Buf x={901.5} y={828.5} inv h={9} />
    <Pin x={922} y={828.5} to={933} />
    <Buf x={730.5} y={882.5} inv />
    <Pin x={751} y={882.5} to={762} />
    <InPin x={836.5} y={882.5} />
    <Buf x={836.5} y={882.5} inv />
    <Pin x={858} y={882.5} to={870} />
    <Pin x={1051} y={791.5} to={1061} />
    <InPin x={1093.5} y={796.5} />
    <Buf x={1093.5} y={796.5} inv h={9} />
    <Pin x={1114} y={796.5} to={1125} />
    <Off x={1086.5} y={769.5} />
    <InPin x={1168.5} y={780.5} />
    <InPin x={1168.5} y={791.5} />
    <And x={1168.5} y={775.5} h={21} w={26} inv />
    <Pin x={1199} y={785.5} to={1210} />
    <InPin x={1274.5} y={785.5} />
    <Pin x={1233} y={764.5} to={1248} />
    <Pin x={1233} y={775.5} to={1248} />
    <Or x={1245.5} y={759.5} h={21} w={29} />
    <And x={1274.5} y={769.5} h={22} w={28} />
    <Pin x={1302} y={780.5} to={1312} />
    <Cross x={829} y={732.5} up />
    <Cross x={893.5} y={732.5} />
    <Cross x={893.5} y={775.5} />
    <Cross x={829} y={828.5} up />
    <Cross x={893.5} y={882.5} />
    <Net x={853} y={730}>n83</Net>
    <Net x={769} y={773}>ZBUF_188_2</Net>
    <Net x={1097} y={751}>clock_module_0/n82</Net>
    <Net x={1136} y={767}>clock_module_0/n24</Net>
  </Canvas>
);

/* ---------- data ---------- */
const cm = "clock_module_0/";
const points = [
  "aclk_div_reg_0_", "aclk_div_reg_1_", "aclk_div_reg_2_", "bcsctl1_reg_4_", "bcsctl1_reg_5_",
  "bcsctl2_reg_1_", "bcsctl2_reg_2_", "bcsctl2_reg_3_", "bcsctl2_reg_4_", "bcsctl2_reg_5_", "bcsctl2_reg_7_",
  "clock_mux_mclk/in0_select_s_reg", "clock_mux_mclk/in0_select_ss_reg",
  "clock_mux_mclk/in1_select_s_reg", "clock_mux_mclk/in1_select_ss_reg",
  "clock_mux_smclk/in0_select_s_reg", "clock_mux_smclk/in0_select_ss_reg",
  "clock_mux_smclk/in1_select_s_reg", "clock_mux_smclk/in1_select_ss_reg",
  "dbg_rst_noscan_reg", "dco_disable_reg", "divax_s_reg_0_", "divax_s_reg_1_",
  "divax_ss_reg_0_", "divax_ss_reg_1_", "divsx_s_reg_0_", "divsx_s_reg_1_", "divsx_ss_reg_0_",
].map((n) => cm + n);

const columns: [string, string][] = [
  ["Type", "97px"], ["Reference", "auto"], ["r:Size", "98px"],
  ["Implementation", "auto"], ["i:Size", "98px"], ["+/-", "98px"],
];
const stages: [string, boolean][] = [
  ["0. Guid.", false], ["1. Ref.", true], ["2. Impl.", true], ["3. Setup", false],
  ["4. Match", false], ["5. Verify", false], ["6. Debug", false],
];
const log = [
  "Passing (equivalent)           0       0       0       0       0       0       0       0",
  "Failing (not equivalent)       0       0       0       0       0       0       0       0",
  "*".repeat(92),
  "Info:  Wrote file '../results/design_icc.fss'.",
  "1",
].join("\n");

const ConeWindow = () => (
  <Dialog aria-label="Passing ConeSchematics.1">
    <TitleBar $h={30} $pad={8}>
      <Icon name="cone" />
      <Caption>Passing ConeSchematics.1 - aclk_div_reg_0_/aclk_div_reg_0_</Caption>
      <WinControls />
    </TitleBar>
    <MenuBar>
      <Icon name="cone" />
      <MenuList $pad={10}>{menu(["&File", "&Edit", "&View", "Set&up", "E&CO", "&Window", "&Help"])}</MenuList>
      <Spacer />
      <Tool $w={23} aria-label="Detach"><Icon name="upBox" /></Tool>
      <Tool $w={23} aria-label="Restore window"><Icon name="backBoxOff" /></Tool>
      <Tool $w={23} aria-label="Close view"><Icon name="close" /></Tool>
    </MenuBar>
    <Toolbar>
      <ToolGroup $dark>
        <Grip />
        {tools(["binA", "binB", "probe", "binC", "binD", "binE", "binAB", "pencil", "down", "markOff", "markX", "markAll"], "probe")}
      </ToolGroup>
      <ToolGroup $dark>
        <Grip />
        {tools(["coneOff", "compassOn", "bitsOn", "gateLeft", "gateRight"])}
      </ToolGroup>
      <ToolGroup $dark>
        <Grip />
        {tools(["sortDown", "sortUp", "upDown", "binocOff"])}
      </ToolGroup>
      <ToolGroup $dark>
        <Grip />
        {tools(["cursor", "zoomPlus", "zoomMinus", "zoomFit", "zoomIn", "zoomOut", "zoomBack", "left", "right"], "cursor")}
      </ToolGroup>
      <ToolGroup $last>
        <Grip />
        {tools(["stackDown", "stackUp"])}
      </ToolGroup>
    </Toolbar>
    <DialogMain>
      <SideBar>
        <Grip $across />
        <SideTools>
          {tools(["pin", "pinPlus", "pinCheck", "bolt", "oneZero", "cut", "netX", "netBox", "netBox2", "cutGate", "schematic", "newBox", "blocks"], "bolt")}
        </SideTools>
        <SideRule />
        {tools(["undo", "redo"])}
      </SideBar>
      <Work>
        <Coloring>
          Coloring:
          <FieldLabel htmlFor="cell">&nbsp;Cell</FieldLabel>
          <Picker $w={170}>
            <Select id="cell"><option>Power Domain</option></Select>
            <Svg width="9" height="16"><path d="M0 4h9L4.500 12z" /></Svg>
          </Picker>
          <FieldLabel htmlFor="net">Net</FieldLabel>
          <Picker $w={151}>
            <Select id="net"><option>Simulation Values</option></Select>
            <Svg width="9" height="16"><path d="M0 4h9L4.500 12z" /></Svg>
          </Picker>
        </Coloring>
        <Legend>
          <div>Cells:</div>
          <div>
            Nets: <Key $c="#f0793a">Logic 1</Key>
            <Key $c="#5f5fe6">Logic 0</Key>
            <Key $c="#8c8c8c">Other</Key>
          </div>
        </Legend>
        <Banner $bg="#800000" $pad={0}>
          Reference&gt;&gt;&gt; clock_module_0/aclk_div_reg_0_ (SDFFARX1_RVT) (SAED32RVT_TT1P05V25C)
        </Banner>
        <View $after={9}>
          <ReferenceCone />
          <Scroll parts={[0, 161, 50]} />
          <Scroll row parts={[84, 846, 12]} />
        </View>
        <Banner $bg="#0000ff" $pad={5}>Implementation&gt;&gt;&gt;</Banner>
        <View $after={0}>
          <ImplementationCone />
          <Scroll parts={[12, 127, 30]} />
          <Scroll row parts={[0, 928, 13]} />
        </View>
      </Work>
    </DialogMain>
    <Status $h={23} $pad="2px 0 0 4px">
      Ready
      <SizeGrip width="17" height="17">
        <path d="M0 17L17 0M4 17L17 4M8 17l9-9M12 17l5-5" stroke="#9a9a9a" strokeWidth="1.500" />
      </SizeGrip>
    </Status>
  </Dialog>
);

export default function App() {
  return (
    <Shell>
      <Global />
      <TitleBar $h={23} $pad={0} $dim>
        <Icon name="logo" size={14} />
        <Caption>Formality - TopLevelMain.1</Caption>
        <WinControls restore />
      </TitleBar>
      <MenuBar $dim>
        <Icon name="logo" size={14} />
        <MenuList $pad={10}>{menu(["&File", "&Edit", "&View", "&Designs", "&Run", "E&CO", "&Window", "&Help"])}</MenuList>
        <Icon name="search" />
        <Spacer />
        <Tool $w={23} aria-label="Detach"><Icon name="upBox" /></Tool>
        <Tool $w={23} aria-label="Restore window"><Icon name="backBoxOn" /></Tool>
        <Tool $w={23} aria-label="Close view"><Icon name="close" /></Tool>
      </MenuBar>
      <Toolbar>
        <ToolGroup $first>
          <Grip />
          {tools(["treeR", "treeI"])}
        </ToolGroup>
        <ToolGroup>
          <Grip />
          {tools(["compassOff", "check", "lens"])}
        </ToolGroup>
        <ToolGroup>
          <Grip />
          {tools(["coneOff", "bitsOff", "compassTail"])}
        </ToolGroup>
        <ToolGroup>
          <Grip />
          {tools(["binocOff"])}
        </ToolGroup>
        <ToolGroup>
          <Grip />
          {tools(["doc", "help"])}
        </ToolGroup>
        <ToolGroup $last>
          <Grip />
          {tools(["folder", "save"])}
        </ToolGroup>
      </Toolbar>

      <Paths>
        <PathLabel htmlFor="ref">Reference</PathLabel>
        <PathInput id="ref" defaultValue="r:/WORK/openMSP430" />
        <PathLabel htmlFor="impl">Implementation</PathLabel>
        <PathInput id="impl" defaultValue="i:/WORK/openMSP430" />
        <Verdict>Verification Succeeded</Verdict>
      </Paths>

      <Stages>
        {stages.map(([name, done]) => (
          <Stage key={name}>
            {done && <Icon name="tick" />}
            {name}
          </Stage>
        ))}
      </Stages>

      <Tabs role="tablist">
        <Tab role="tab">Failing Points</Tab>
        <Tab role="tab" $on>Passing Points</Tab>
        <Tab role="tab">Aborted Points</Tab>
        <Tab role="tab">Unverified Points</Tab>
        <Tab role="tab" disabled>Probe Points</Tab>
        <Tab role="tab" disabled>Analyses</Tab>
        <Tab role="tab" disabled>Loops</Tab>
      </Tabs>
      <Panel>
        <FilterRow>
          <FilterInput aria-label="Filter expression" placeholder="Enter filter expression" />
          {tools(["funnelOff", "funnelTable", "gear"], undefined, 25)}
        </FilterRow>
        <Grid>
          <Gutter>
            {points.map((_, i) => <li key={i}>{i + 1}</li>)}
          </Gutter>
          <GridFrame>
            <TableBox>
              <Table>
                <colgroup>
                  {columns.map(([n, w]) => <col key={n} width={w === "auto" ? undefined : w} />)}
                </colgroup>
                <thead>
                  <tr>
                    {columns.map(([n]) => (
                      <th key={n}><Head><HeadText>{n}</HeadText><HeadRule /></Head></th>
                    ))}
                  </tr>
                </thead>
                <tbody>
                  {points.map((p) => (
                    <tr key={p}>
                      <td>DFF</td>
                      <Path>{p}</Path>
                      <td />
                      <Path>{p}</Path>
                      <td />
                      <td />
                    </tr>
                  ))}
                </tbody>
              </Table>
            </TableBox>
            <Scroll parts={[0, 27, 493]} />
          </GridFrame>
        </Grid>
      </Panel>

      <Under>
        <UnderText>Points: 973</UnderText>
        <Actions>
          <Choice><Radio type="radio" name="names" />Original</Choice>
          <Choice><Radio type="radio" name="names" defaultChecked />Mapped</Choice>
          <Buttons>
            <PlainButton $span="1" disabled><Icon name="lens" />Analyze</PlainButton>
            <PlainButton $span="2 / 4" disabled>Analyze Selected Points</PlainButton>
            <PlainButton $span="1 / 3" disabled>Get Loop Data</PlainButton>
          </Buttons>
        </Actions>
      </Under>

      <Splitter />
      <Dock>
        <DockStrip>
          <IconButton aria-label="Collapse"><Svg width="9" height="9"><path d="M0 0h9L4.500 9z" fill={P} /></Svg></IconButton>
          <IconButton aria-label="Close console"><Icon name="close" size={12} /></IconButton>
          <DockGrip />
          <DockName>Console</DockName>
          <Icon name="terminal" size={15} />
        </DockStrip>
        <DockBody>
          <LogFrame>
            <Log>{log}</Log>
            <Scroll parts={[55, 28, 0]} />
          </LogFrame>
          <LogTabs role="tablist">
            <LogTab role="tab" $on>Log</LogTab>
            <LogTab role="tab">History</LogTab>
          </LogTabs>
          <CommandRow>
            <Prompt type="button">Formality (verify)&gt;</Prompt>
            <Command aria-label="Command" />
          </CommandRow>
        </DockBody>
      </Dock>
      <Status $h={33} $pad="0 5px 0 1px">
        <span>Ready</span>
        <span>Shell State: verify</span>
      </Status>
      <ConeWindow />
    </Shell>
  );
}
